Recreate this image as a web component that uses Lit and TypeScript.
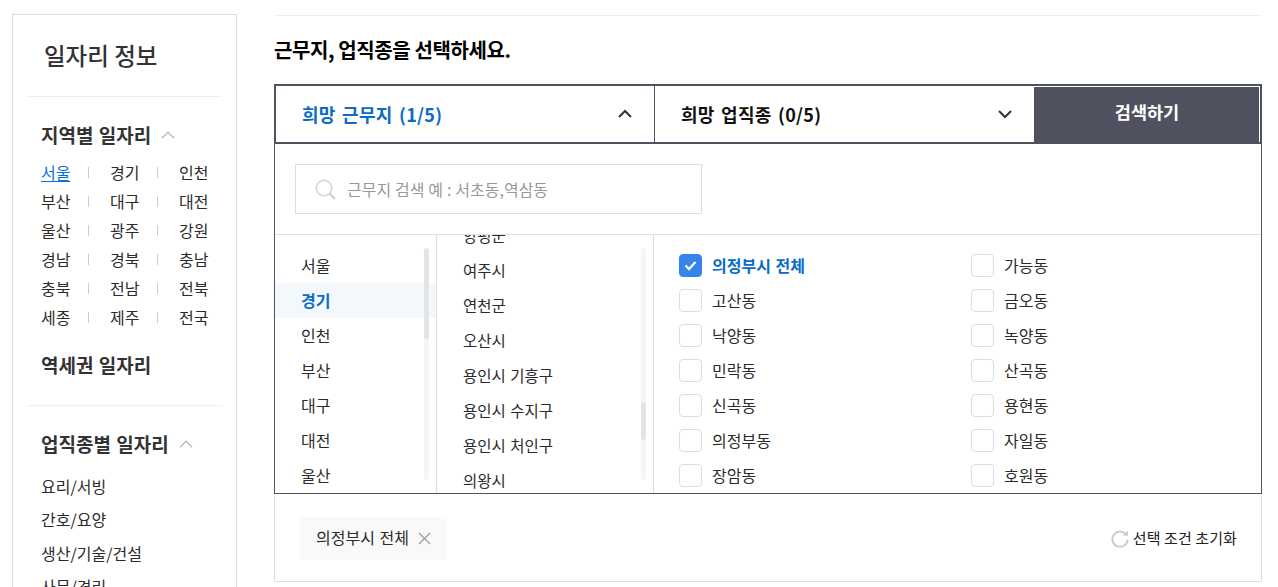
import { LitElement, html, css, svg } from "lit";
import { customElement } from "lit/decorators.js";

const chev = (up: boolean) => svg`<path d="${up ? "M1 8 L7 2 L13 8" : "M1 2 L7 8 L13 2"}" fill="none" stroke="currentColor" stroke-width="2"/>`;

@customElement("app-root")
export class AppRoot extends LitElement {
  static styles = css`
    :host { display: flex; width: 1278px; height: 587px; overflow: hidden; background: #fff; font-family: "Noto Sans CJK KR", sans-serif; font-size: 16px; word-spacing: 1px; color: #2b2b2b; }
    * { box-sizing: border-box; }
    .side { width: 225px; height: 640px; margin: 14px 0 0 12px; border: 1px solid #ddd; flex: none; padding: 0 14px; }
    .side h1 { margin: 0; height: 82px; padding: 20px 0 0 17px; font-size: 23.5px; line-height: 40px; font-weight: 500; color: #333; border-bottom: 1px solid #eee; word-spacing: 0; }
    .sec { padding: 21px 0 0 14px; }
    .sec h2 { margin: 0; font-size: 19px; line-height: 33px; font-weight: 700; color: #333; display: flex; align-items: center; gap: 10px; }
    .sec h2 svg { color: #bbb; width: 14px; height: 10px; }
    .regions { display: grid; grid-template-columns: 30px 39px 30px 39px 30px; margin-top: 7px; line-height: 29px; }
    .regions a { white-space: nowrap; }
    .regions a.on { color: #0a6fd8; text-decoration: underline; text-underline-offset: 2px; }
    .regions i { width: 1px; height: 11px; background: #ccc; margin: 9px 0 0 17px; }
    .sec .sta { margin-top: 16px; }
    .line { border-bottom: 1px solid #eee; height: 25px; }
    .jobs { margin-top: 10px; line-height: 33.4px; }
    .main { width: 988px; margin-left: 37px; flex: none; display: flex; flex-direction: column; }
    .top { margin-top: 15px; border-top: 1px solid #eee; height: 1px; }
    .ttl { margin: 0; height: 68px; padding-top: 18px; font-size: 20px; line-height: 32px; font-weight: 700; color: #000; letter-spacing: -0.4px; word-spacing: 0; }
    .tabs { height: 60px; border: 2px solid #4f525e; display: flex; }
    .tab { display: flex; align-items: center; justify-content: space-between; font-size: 18px; font-weight: 700; color: #111; letter-spacing: 0.3px; word-spacing: 2px; }
    .tab svg { width: 14px; height: 10px; color: #333; }
    .t1 { width: 379px; padding: 0 22px 0 26px; border-right: 1px solid #4f525e; color: #0a6cc4; }
    .t2 { width: 379px; padding: 0 22px 0 26px; }
    .btn { flex: 1; margin: 1px 1px 0 0; background: #4f525e; color: #fff; font-size: 17.5px; font-weight: 700; display: flex; align-items: center; justify-content: center; padding: 0 0 6px 1px; }
    .panel { height: 350px; border: 1px solid #4f525e; border-top: 0; display: flex; flex-direction: column; }
    .sr { height: 91px; padding: 20px 20px 0; border-bottom: 1px solid #e1e1e1; flex: none; }
    .inp { width: 407px; height: 50px; border: 1px solid #ddd; display: flex; align-items: center; padding-left: 19px; gap: 11px; color: #999; word-spacing: 0.3px; }
    .inp svg { width: 21px; height: 21px; }
    .cols { flex: 1; display: flex; min-height: 0; }
    .c1, .c2 { position: relative; overflow: hidden; border-right: 1px solid #ddd; flex: none; }
    .c1 { width: 162px; padding-top: 13px; }
    .c2 { width: 217px; font-size: 15.5px; }
    .c2 .list { margin-top: -17px; }
    .it { height: 35px; line-height: 34px; padding-left: 26px; white-space: nowrap; }
    .it.on { background: #f3f8fc; color: #0a6cc4; font-weight: 700; }
    .track { position: absolute; top: 13px; width: 5px; height: 232px; background: #f5f5f5; border-radius: 3px; }
    .thumb { position: absolute; left: 0; width: 5px; background: #e4e4e4; border-radius: 3px; }
    .c1 .track { left: 149px; }
    .c2 .track { left: 204px; }
    .c3 { flex: 1; padding: 19px 0 0 25px; display: grid; grid-template-columns: 292px 1fr; grid-auto-rows: 35px; overflow: hidden; }
    .ck { display: flex; align-items: flex-start; gap: 10px; line-height: 22px; white-space: nowrap; }
    .box { width: 23px; height: 23px; border: 1px solid #ddd; border-radius: 4px; flex: none; display: flex; align-items: center; justify-content: center; }
    .box.on { background: #3584ec; border-color: #3584ec; }
    .box svg { width: 13px; height: 11px; }
    .ck.on { color: #0a6cc4; font-weight: 700; }
    .foot { height: 88px; border: 1px solid #ddd; border-top: 0; display: flex; align-items: center; justify-content: space-between; padding: 0 24px 0 25px; }
    .tag { width: 147px; height: 43px; background: #f9f9f9; display: flex; align-items: center; padding: 0 0 2px 16px; gap: 9px; margin-top: 1px; }
    .tag svg { width: 13px; height: 13px; margin-top: 3px; }
    .reset { display: flex; align-items: center; gap: 5px; color: #222; font-size: 15px; word-spacing: 0; letter-spacing: 0.1px; }
    .reset svg { width: 18px; height: 18px; margin-top: 2px; }
    .reset span { margin-left: -1px; }
  `;

  render() {
    const regions = ["서울","경기","인천","부산","대구","대전","울산","광주","강원","경남","경북","충남","충북","전남","전북","세종","제주","전국"];
    const c1 = ["서울","경기","인천","부산","대구","대전","울산"];
    const c2 = ["양평군","여주시","연천군","오산시","용인시 기흥구","용인시 수지구","용인시 처인구","의왕시"];
    const c3 = ["의정부시 전체","가능동","고산동","금오동","낙양동","녹양동","민락동","산곡동","신곡동","용현동","의정부동","자일동","장암동","호원동"];
    return html`
      <aside class="side">
        <h1>일자리 정보</h1>
        <div class="sec">
          <h2>지역별 일자리 <svg viewBox="0 0 15 10">${svg`<path d="M1 8.5 L7.5 2 L14 8.5" fill="none" stroke="currentColor" stroke-width="1.4"/>`}</svg></h2>
          <div class="regions">
            ${regions.map((r, i) => html`<a class=${i === 0 ? "on" : ""}>${r}</a>${i % 3 < 2 ? html`<i></i>` : ""}`)}
          </div>
          <h2 class="sta">역세권 일자리</h2>
        </div>
        <div class="line"></div>
        <div class="sec">
          <h2>업직종별 일자리 <svg viewBox="0 0 15 10">${svg`<path d="M1 8.5 L7.5 2 L14 8.5" fill="none" stroke="currentColor" stroke-width="1.4"/>`}</svg></h2>
          <div class="jobs">
            <div>요리/서빙</div><div>간호/요양</div><div>생산/기술/건설</div><div>사무/경리</div>
          </div>
        </div>
      </aside>
      <main class="main">
        <div class="top"></div>
        <h2 class="ttl">근무지, 업직종을 선택하세요.</h2>
        <div class="tabs">
          <div class="tab t1"><span>희망 근무지 (1/5)</span><svg viewBox="0 0 14 10">${chev(true)}</svg></div>
          <div class="tab t2"><span>희망 업직종 (0/5)</span><svg viewBox="0 0 14 10">${chev(false)}</svg></div>
          <div class="btn">검색하기</div>
        </div>
        <div class="panel">
          <div class="sr">
            <div class="inp">
              <svg viewBox="0 0 21 21">${svg`<circle cx="9" cy="9" r="7.8" fill="none" stroke="#ddd" stroke-width="2"/><path d="M14.5 14.5 L20 20" stroke="#ccc" stroke-width="2"/>`}</svg>
              <span>근무지 검색 예 : 서초동,역삼동</span>
            </div>
          </div>
          <div class="cols">
            <div class="c1">
              ${c1.map((x, i) => html`<div class="it ${i === 1 ? "on" : ""}">${x}</div>`)}
              <div class="track"><div class="thumb" style="top:0;height:91px"></div></div>
            </div>
            <div class="c2">
              <div class="list">${c2.map((x) => html`<div class="it">${x}</div>`)}</div>
              <div class="track"><div class="thumb" style="top:154px;height:38px"></div></div>
            </div>
            <div class="c3">
              ${c3.map((x, i) => html`<div class="ck ${i === 0 ? "on" : ""}"><div class="box ${i === 0 ? "on" : ""}">${i === 0 ? html`<svg viewBox="0 0 13 11">${svg`<path d="M1.5 5.5 L5 9 L11.5 2" fill="none" stroke="#fff" stroke-width="2.4"/>`}</svg>` : ""}</div><span>${x}</span></div>`)}
            </div>
          </div>
        </div>
        <div class="foot">
          <div class="tag"><span>의정부시 전체</span><svg viewBox="0 0 13 13">${svg`<path d="M1 1 L12 12 M12 1 L1 12" stroke="#999" stroke-width="1.2"/>`}</svg></div>
          <div class="reset"><svg viewBox="0 0 18 18">${svg`<path d="M14.4 3.8 A7.6 7.6 0 1 0 16.6 9.8" fill="none" stroke="#ccc" stroke-width="2"/><path d="M12 5.8 L17 5.8 L17 0.8 Z" fill="#ccc"/>`}</svg><span>선택 조건 초기화</span></div>
        </div>
      </main>
    `;
  }
}
